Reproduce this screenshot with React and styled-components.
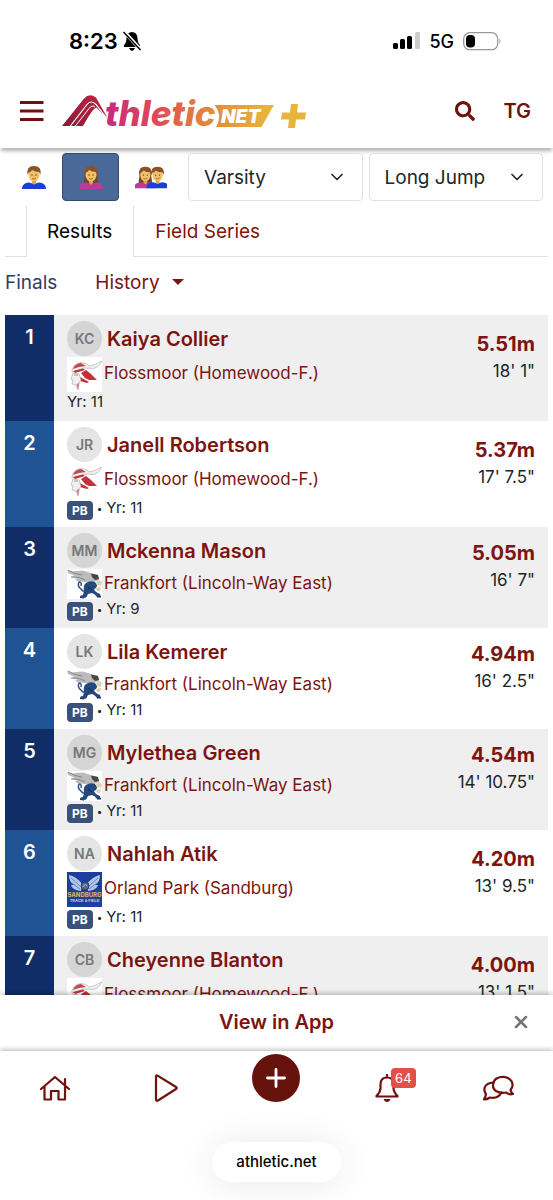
import React from 'react'
import styled, { createGlobalStyle } from 'styled-components'
import { FaSearch } from 'react-icons/fa'
import { ChevronDown, X } from 'lucide-react'

const results = [
    { initials: 'KC', name: 'Kaiya Collier', team: 'Flossmoor (Homewood-F.)', logo: 'viking', year: 11, pb: false, metric: '5.51m', imperial: `18' 1"` },
    { initials: 'JR', name: 'Janell Robertson', team: 'Flossmoor (Homewood-F.)', logo: 'viking', year: 11, pb: true, metric: '5.37m', imperial: `17' 7.5"` },
    { initials: 'MM', name: 'Mckenna Mason', team: 'Frankfort (Lincoln-Way East)', logo: 'griffin', year: 9, pb: true, metric: '5.05m', imperial: `16' 7"` },
    { initials: 'LK', name: 'Lila Kemerer', team: 'Frankfort (Lincoln-Way East)', logo: 'griffin', year: 11, pb: true, metric: '4.94m', imperial: `16' 2.5"` },
    { initials: 'MG', name: 'Mylethea Green', team: 'Frankfort (Lincoln-Way East)', logo: 'griffin', year: 11, pb: true, metric: '4.54m', imperial: `14' 10.75"` },
    { initials: 'NA', name: 'Nahlah Atik', team: 'Orland Park (Sandburg)', logo: 'sandburg', year: 11, pb: true, metric: '4.20m', imperial: `13' 9.5"` },
    { initials: 'CB', name: 'Cheyenne Blanton', team: 'Flossmoor (Homewood-F.)', logo: 'viking', year: 11, pb: false, metric: '4.00m', imperial: `13' 1.5"` },
]

function BrandLogo() {
    return (
        <svg width="252" height="50" viewBox="8 3 252 50" role="img" aria-label="Athletic.net plus">
            <defs>
                <linearGradient id="brand" gradientUnits="userSpaceOnUse" x1="56" y1="0" x2="220" y2="0">
                    <stop offset="0" stopColor="#c92a7c" />
                    <stop offset="0.3" stopColor="#dc4a58" />
                    <stop offset="0.62" stopColor="#e2883c" />
                    <stop offset="1" stopColor="#e8b53b" />
                </linearGradient>
                <linearGradient id="track" x1="0" y1="1" x2="1" y2="0">
                    <stop offset="0" stopColor="#8a1c38" />
                    <stop offset="1" stopColor="#bf2343" />
                </linearGradient>
            </defs>
            <path d="M12 43 34 15.500Q39.500 9.500 46 14.500L57 34Q51 30 46.500 24.500 43 25 33 43Z" fill="url(#track)" />
            <path d="M20 43.500 37 21.500Q41 16.500 46 21.500L55 33" fill="none" stroke="#fff" strokeWidth="1.200" />
            <path d="M25 43.500 39 25.500Q42 21.500 45 24" fill="none" stroke="#fff" strokeWidth="1" />
            <text x="55" y="43" fontFamily="Inter, sans-serif" fontSize="35" fontWeight="800" fontStyle="italic" fill="url(#brand)">thletic</text>
            <path d="M164.500 22H224L211.500 44H166Q173 33 164.500 22Z" fill="url(#brand)" />
            <text x="171" y="40" fontFamily="Inter, sans-serif" fontSize="19" fontWeight="900" fontStyle="italic" fill="#fff">NET</text>
            <path d="M241 21H248L247 29.500H256L255 36.500H246L245 45H238L239 36.500H231L232 29.500H240Z" fill="#e8b53b" />
        </svg>
    )
}

function Person({ x = 0, woman }) {
    return (
        <g transform={`translate(${x} 0)`}>
            {woman && <path d="M6 20Q4 20 5.500 14 5 3 12 2 19 3 18.500 14 20 20 18 20Z" fill="#74452a" />}
            <path d="M0 25Q0 19 7 18.500L12 20 17 18.500Q24 19 24 25Z" fill={woman ? '#bd3b94' : '#1c3fdc'} />
            <path d="M10 14H14V19Q12 22 10 19Z" fill="#dba34c" />
            <ellipse cx="12" cy="11" rx="5.500" ry="6.500" fill="#f0c06a" />
            <path d="M5.500 11Q4 2 12 2 20 2 18.500 11L17 8Q13 8 10 6 8 9 7 8Z" fill="#8a5229" />
            <circle cx="10" cy="11" r="0.700" fill="#5a3418" />
            <circle cx="14" cy="11" r="0.700" fill="#5a3418" />
            <path d="M10 14.500Q12 15.500 14 14.500" fill="none" stroke="#a0542b" strokeWidth="0.800" />
        </g>
    )
}

function TeamLogo({ kind }) {
    if (kind === 'griffin') {
        return (
            <svg width="35" height="30" viewBox="0 0 35 30" aria-hidden="true">
                <rect width="35" height="30" fill="#fff" />
                <path d="M0 1 5 2.500 9 2 16 1.500 24 4 31 6 32 11 27 13 18 13 10 12 8 10 11 9 4 8 7 6.500 1 4Z" fill="#bcbcbc" />
                <path d="M1 1 8 4.500 15 6M4 8 12 8.500 18 11" fill="none" stroke="#777" strokeWidth="0.800" />
                <path d="M24 4.500 31 6 32 10 28 11 25 8Z" fill="#474747" />
                <path d="M19 14Q23 11 28 13L30 16Q30 19 27 20L28 22Q30 24 33 25L34 28 30 28Q28 25 25 24L21 25Q20 28 18 29L13 28Q13 26 16 26L17 22Q16 16 19 14Z" fill="#24497f" />
                <path d="M14 20Q10 17 12 13Q15 13 14 17M14 20Q16 23 19 22" fill="none" stroke="#31548a" strokeWidth="1.500" />
                <path d="M29 13 32 11 35 13 34 17 30 16ZM29 19 34 18 33 22 30 22Z" fill="#d9d3b4" />
                <path d="M21 18 25 21M13 28.500 17 29M30 28 34 28" stroke="#15284c" strokeWidth="1" />
            </svg>
        )
    }
    if (kind === 'sandburg') {
        return (
            <svg width="35" height="35" viewBox="0 0 35 35" aria-hidden="true">
                <rect width="35" height="35" fill="#1c3f9e" />
                <path d="M2 3Q10 5 15 12L14 19Q5 18 4 13L7 13Q2 10 2 3ZM33 3Q25 5 20 12L21 19Q30 18 31 13L28 13Q33 10 33 3Z" fill="#b4c6ea" />
                <path d="M4 6 13 14M5 11 13 17M31 6 22 14M30 11 22 17" stroke="#5674bd" strokeWidth="0.800" />
                <circle cx="18" cy="14" r="4" fill="#546a96" stroke="#24396f" />
                <path d="M16 15Q18 11 20 14" stroke="#c9a765" fill="none" />
                <text x="17.500" y="25" textAnchor="middle" fontFamily="Inter, sans-serif" fontSize="6" fontWeight="800" fill="#d9ad5c">SANDBURG</text>
                <text x="17.500" y="30" textAnchor="middle" fontFamily="Inter, sans-serif" fontSize="4" fontWeight="800" fill="#c9c2a5">TRACK &amp; FIELD</text>
            </svg>
        )
    }
    return (
        <svg width="35" height="35" viewBox="0 0 35 35" aria-hidden="true">
            <rect width="35" height="35" fill="#fff" />
            <path d="M5 13Q7 6 14 5.500 19 5.500 22 9 29 8 34.500 4 33 10 26 11.500L17 11 5 15Z" fill="#f0f0f0" stroke="#b5b5b5" strokeWidth="0.700" />
            <path d="M6 12Q8 6.500 14 6L19 9 12 10Z" fill="#c04a54" />
            <path d="M6 14 16 11.500 18 13 8 16ZM14 16 19 13 24 17 30 23 22 23 18 21ZM13 20 22 25 20 26 13 24Z" fill="#c5303d" />
            <path d="M6 16 4 22 6 23 5 27 9 28 11 33 12 26 14 23 12 17Z" fill="#f0f0f0" stroke="#b0b0b0" strokeWidth="0.700" />
            <path d="M7 18 11 18" stroke="#888" strokeWidth="0.800" />
            <path d="M9.500 27 11 33 12.500 26Z" fill="#c9858b" />
        </svg>
    )
}

function ResultRow({ result, place }) {
    return (
        <ResultRowStyled>
            <Place>{place}</Place>
            <AthleteCell>
                <AthleteLine>
                    <Avatar>{result.initials}</Avatar>
                    <AthleteLink href="#athlete">{result.name}</AthleteLink>
                </AthleteLine>
                <TeamLine>
                    <TeamLogo kind={result.logo} />
                    <a href="#team">{result.team}</a>
                </TeamLine>
                <MetaLine>
                    {result.pb && <><Badge>PB</Badge><Dot>•</Dot></>}
                    <span>Yr: {result.year}</span>
                </MetaLine>
            </AthleteCell>
            <MarkCell>
                <MarkLink href="#mark">{result.metric}</MarkLink>
                <Imperial>{result.imperial}</Imperial>
            </MarkCell>
        </ResultRowStyled>
    )
}

function App() {
    const [gender, setGender] = React.useState('women')

    return (
        <>
            <GlobalStyle />
            <AppStyled>
                <StatusBar>
                    <StatusGroup>
                        <Clock>8:23</Clock>
                        <svg width="20" height="22" viewBox="0 0 20 22" aria-hidden="true">
                            <path d="M10 2Q15 2 15.500 8 15.500 13 18 15V17H2V15Q4.500 13 4.500 8 5 2 10 2ZM7 18H13Q12 21 10 21 8 21 7 18Z" fill="#000" />
                            <path d="M1.500 1 19 20" stroke="#fff" strokeWidth="3.500" />
                            <path d="M1.500 2 18.500 20" stroke="#000" strokeWidth="1.500" />
                        </svg>
                    </StatusGroup>
                    <StatusGroup>
                        <svg width="27" height="18" viewBox="0 0 27 18" aria-hidden="true">
                            <rect x="0" y="11" width="5" height="6" rx="1.500" />
                            <rect x="7" y="7" width="5" height="10" rx="1.500" />
                            <rect x="14" y="4" width="5" height="13" rx="1.500" />
                            <rect x="22" y="0" width="5" height="17" rx="1.500" fill="#ccc" />
                        </svg>
                        <Network>5G</Network>
                        <svg width="39" height="19" viewBox="0 0 39 19" aria-hidden="true">
                            <rect x="0.700" y="0.700" width="34" height="17" rx="6" fill="none" stroke="#999" strokeWidth="1.300" />
                            <rect x="3" y="3" width="9" height="12.500" rx="4" />
                            <path d="M36.500 6.500Q38.500 9 36.500 12Z" fill="#999" />
                        </svg>
                    </StatusGroup>
                </StatusBar>
                <Header>
                    <IconButton aria-label="Menu">
                        <svg width="24" height="22" viewBox="0 0 24 22"><path d="M0 2.500H23.500M0 11H23.500M0 19.500H23.500" stroke="#6f120f" strokeWidth="2.800" /></svg>
                    </IconButton>
                    <BrandLink href="#home"><BrandLogo /></BrandLink>
                    <IconButton aria-label="Search"><FaSearch size={20} /></IconButton>
                    <Account>TG</Account>
                </Header>
                <Content>
                    <Filters>
                        <GenderButton aria-label="Men" $active={gender === 'men'} onClick={() => setGender('men')}>
                            <svg width="24" height="26" viewBox="0 0 24 26"><Person /></svg>
                        </GenderButton>
                        <GenderButton aria-label="Women" $active={gender === 'women'} onClick={() => setGender('women')}>
                            <svg width="24" height="26" viewBox="0 0 24 26"><Person woman /></svg>
                        </GenderButton>
                        <GenderButton aria-label="Mixed" $wide $active={gender === 'mixed'} onClick={() => setGender('mixed')}>
                            <svg width="32" height="26" viewBox="0 0 34 26"><Person x={-1} woman /><Person x={12} /></svg>
                        </GenderButton>
                        <SelectBox>
                            <select aria-label="Division" defaultValue="Varsity">
                                <option>Varsity</option>
                                <option>JV</option>
                            </select>
                            <ChevronDown size={20} />
                        </SelectBox>
                        <SelectBox>
                            <select aria-label="Event" defaultValue="Long Jump">
                                <option>Long Jump</option>
                                <option>Triple Jump</option>
                            </select>
                            <ChevronDown size={20} />
                        </SelectBox>
                    </Filters>
                    <Tabs>
                        <Tab href="#results" $active>Results</Tab>
                        <Tab href="#series">Field Series</Tab>
                    </Tabs>
                    <SubNav>
                        <span>Finals</span>
                        <HistoryButton>
                            History
                            <svg width="12" height="6" viewBox="0 0 12 6"><path d="M0 0H12L6 6Z" fill="currentColor" /></svg>
                        </HistoryButton>
                    </SubNav>
                    <ResultsTable>
                        <tbody>
                            {results.map((result, i) => {
                                return <ResultRow key={result.name} result={result} place={i + 1} />
                            })}
                        </tbody>
                    </ResultsTable>
                </Content>
                <AppPrompt>
                    <a href="#app">View in App</a>
                    <IconButton aria-label="Close" $muted><X size={20} strokeWidth={3} /></IconButton>
                </AppPrompt>
                <BottomNav>
                    <NavLink href="#home" aria-label="Home">
                        <svg width="30" height="26" viewBox="0 0 30 26">
                            <path d="M1 14 15 2 29 14M4.500 11.500V24.500H11V16H18.500V24.500H25V11.500M25 10V4" />
                        </svg>
                    </NavLink>
                    <NavLink href="#watch" aria-label="Watch">
                        <svg width="24" height="28" viewBox="0 0 24 28"><path d="M2 3Q2 0.500 4 1.800L22 13Q23.500 14 22 15L4 26.500Q2 27.500 2 25Z" /></svg>
                    </NavLink>
                    <NavLink href="#add" aria-label="Add" $raised>
                        <AddCircle>
                            <svg width="20" height="20" viewBox="0 0 20 20"><path d="M10 1.500V18.500M1.500 10H18.500" /></svg>
                        </AddCircle>
                    </NavLink>
                    <NavLink href="#alerts" aria-label="Notifications">
                        <BellWrap>
                            <svg width="24" height="28" viewBox="0 0 24 28">
                                <path d="M12 1V3.500M12 3.500Q5.500 3.500 5.500 10.500V14Q5.500 18 1.500 22V22.500H22.500V22Q18.500 18 18.500 14V10.500Q18.500 3.500 12 3.500Z" />
                                <path d="M8.500 25H15.500Q14.500 28 12 28 9.500 28 8.500 25Z" fill="currentColor" stroke="none" />
                            </svg>
                            <Count>64</Count>
                        </BellWrap>
                    </NavLink>
                    <NavLink href="#messages" aria-label="Messages">
                        <svg width="32" height="26" viewBox="0 0 32 26">
                            <path d="M11 11Q11 6 14.500 3.500 20 0.500 26 3 31 6 30.500 11 30 13 28.500 15 29 17.500 31 19Q27 20 24.500 17.500 18 18.500 14 16 11 14 11 11Z" />
                            <path d="M11.500 7.500Q4 8 2.500 13 2 17 4 19 3.500 22 2 24.500 5 24.500 8 22.500 16 24 19.500 17.500" />
                        </svg>
                    </NavLink>
                </BottomNav>
                <AddressArea>
                    <Address>athletic.net</Address>
                </AddressArea>
            </AppStyled>
        </>
    )
}

const GlobalStyle = createGlobalStyle`
    * {
        box-sizing: border-box;
    }

    body {
        margin: 0;
        background: #fff;
        color: #212529;
        font-family: Inter, "Liberation Sans", sans-serif;
    }

    a {
        color: #7c1410;
        text-decoration: none;
    }

    button, select {
        font-family: inherit;
        cursor: pointer;
    }

    svg {
        display: block;
        flex-shrink: 0;
    }
`;

const AppStyled = styled.div`
    height: 100vh;
    display: flex;
    flex-direction: column;
    overflow: hidden;
`;

const StatusBar = styled.div`
    display: flex;
    justify-content: space-between;
    align-items: center;
    padding: 27px 51px 20px 69px;
    color: #000;
`;

const StatusGroup = styled.div`
    display: flex;
    align-items: center;
    gap: 9px;
    height: 28px;

    &:first-child {
        gap: 4px;
    }
`;

const Clock = styled.span`
    font-size: 22px;
    font-weight: 600;
`;

const Network = styled.span`
    font-size: 18px;
    font-weight: 500;
`;

const Header = styled.header`
    display: flex;
    align-items: center;
    height: 73px;
    padding: 0 22px 1px 20px;
    box-shadow: 0 4px 4px -1px rgba(0, 0, 0, 0.3);
    position: relative;
    flex-shrink: 0;
`;

const IconButton = styled.button`
    display: flex;
    padding: 0;
    border: 0;
    background: none;
    color: ${props => props.$muted ? '#757575' : '#6f120f'};
`;

const BrandLink = styled.a`
    margin-left: 14px;
    margin-right: auto;
`;

const Account = styled.button`
    margin-left: 28px;
    padding: 0;
    border: 0;
    background: none;
    color: #6f120f;
    font-size: 20px;
    font-weight: 600;
`;

const Content = styled.main`
    flex: 1;
    min-height: 0;
    overflow: hidden;
    padding: 5px 5px 0;
`;

const Filters = styled.div`
    display: flex;
    padding-right: 5px;
`;

const GenderButton = styled.button`
    display: flex;
    align-items: center;
    justify-content: center;
    width: ${props => props.$wide ? '63px' : '57px'};
    height: 48px;
    padding: 0;
    flex-shrink: 0;
    border: 1px solid ${props => props.$active ? '#344c70' : 'transparent'};
    border-radius: 4px;
    background: ${props => props.$active ? '#4a6999' : 'none'};
`;

const SelectBox = styled.div`
    position: relative;
    flex: 1;
    min-width: 0;
    margin-left: 6px;

    select {
        width: 100%;
        height: 48px;
        padding: 0 40px 0 15px;
        appearance: none;
        border: 1px solid #dee2e6;
        border-radius: 4px;
        background: #fff;
        color: #212529;
        font-size: 19px;
    }

    svg {
        position: absolute;
        right: 16px;
        top: 14px;
        pointer-events: none;
    }
`;

const Tabs = styled.nav`
    display: flex;
    height: 52px;
    margin-top: 4px;
    padding-left: 21px;
    border-bottom: 1px solid #dee2e6;
`;

const Tab = styled.a`
    display: flex;
    align-items: center;
    height: 52px;
    padding: 0 21px 0 20px;
    border: solid ${props => props.$active ? '#dee2e6' : 'transparent'};
    border-width: 0 1px;
    background: ${props => props.$active ? '#fff' : 'none'};
    color: ${props => props.$active ? '#000' : '#7c1410'};
    font-size: 19px;
`;

const SubNav = styled.div`
    display: flex;
    align-items: center;
    gap: 38px;
    height: 58px;
    padding-bottom: 8px;
    color: #2c3e5f;
    font-size: 19px;
`;

const HistoryButton = styled.button`
    display: flex;
    align-items: center;
    gap: 12px;
    padding: 0;
    border: 0;
    background: none;
    color: #7c1410;
    font-size: 19px;
`;

const ResultsTable = styled.table`
    width: 100%;
    border-collapse: collapse;
`;

const Place = styled.td`
    width: 49px;
    padding: 8px 0 0;
    vertical-align: top;
    text-align: center;
    background: #205394;
    color: #fff;
    font-size: 20px;
    font-weight: 600;
    line-height: 28px;
`;

const AthleteCell = styled.td`
    padding: 6px 0 6px 13px;
`;

const MarkCell = styled.td`
    padding: 0 13px 21px 0;
    vertical-align: middle;
    text-align: right;
`;

const Avatar = styled.span`
    display: flex;
    align-items: center;
    justify-content: center;
    width: 35px;
    height: 35px;
    border-radius: 50%;
    background: #e5e5e5;
    color: #777;
    font-size: 14px;
    font-weight: 600;
`;

const ResultRowStyled = styled.tr`
    &:nth-child(odd) {
        background: #efefef;
    }

    &:nth-child(odd) ${Place} {
        background: #102d67;
    }

    &:nth-child(odd) ${Avatar} {
        background: #d5d5d5;
    }
`;

const AthleteLine = styled.div`
    display: flex;
    align-items: center;
    gap: 5px;
    margin-bottom: 1px;
`;

const AthleteLink = styled.a`
    padding-top: 1px;
    font-size: 20px;
    font-weight: 600;
    line-height: 28px;
`;

const TeamLine = styled.div`
    display: flex;
    align-items: center;
    gap: 2px;
    font-size: 17px;
    line-height: 24px;

    a {
        padding-bottom: 3px;
    }
`;

const MetaLine = styled.div`
    display: flex;
    align-items: flex-start;
    gap: 4px;
    height: 23px;
    font-size: 15px;
    line-height: 20px;
`;

const Badge = styled.span`
    margin-top: 3px;
    padding: 0 5px;
    border-radius: 4px;
    background: #3a5279;
    color: #fff;
    font-size: 12px;
    font-weight: 700;
    line-height: 19px;
`;

const Dot = styled.span`
    font-size: 10px;
`;

const MarkLink = styled.a`
    display: block;
    font-size: 20px;
    font-weight: 700;
    line-height: 27px;
`;

const Imperial = styled.span`
    display: block;
    font-size: 17px;
    line-height: 27px;
`;

const AppPrompt = styled.div`
    display: grid;
    grid-template-columns: 1fr auto 1fr;
    align-items: center;
    height: 56px;
    padding: 0 22px 2px;
    flex-shrink: 0;
    position: relative;
    background: #fff;
    box-shadow: 0 -1px 5px rgba(0, 0, 0, 0.3);

    a {
        grid-column: 2;
        font-size: 20px;
        font-weight: 600;
    }

    button {
        justify-self: end;
    }
`;

const BottomNav = styled.nav`
    display: grid;
    grid-template-columns: repeat(5, 1fr);
    height: 74px;
    flex-shrink: 0;
    position: relative;
    background: #fff;
    box-shadow: 0 -1px 5px rgba(0, 0, 0, 0.3);
`;

const NavLink = styled.a`
    display: flex;
    align-items: center;
    justify-content: center;
    padding-bottom: ${props => props.$raised ? '20px' : '0'};
    color: #6f120f;

    svg {
        fill: none;
        stroke: currentColor;
        stroke-width: 2.2;
        stroke-linecap: round;
        stroke-linejoin: round;
    }
`;

const AddCircle = styled.span`
    display: flex;
    align-items: center;
    justify-content: center;
    width: 48px;
    height: 48px;
    border-radius: 50%;
    background: #65130c;
    color: #fff;

    svg {
        stroke-width: 2.8;
    }
`;

const BellWrap = styled.span`
    position: relative;
`;

const Count = styled.span`
    position: absolute;
    top: -6px;
    left: 16px;
    padding: 0 4px;
    border-radius: 4px;
    background: #e2504a;
    color: #fff;
    font-size: 13px;
    line-height: 20px;
`;

const AddressArea = styled.footer`
    display: flex;
    justify-content: center;
    height: 75px;
    padding-top: 17px;
    flex-shrink: 0;
    position: relative;
    background: #fff;
`;

const Address = styled.span`
    height: 40px;
    padding: 0 24px;
    border-radius: 20px;
    background: #fff;
    box-shadow: 0 2px 36px rgba(0, 0, 0, 0.09);
    color: #000;
    font-size: 15px;
    font-weight: 500;
    line-height: 40px;
`;

export default App
